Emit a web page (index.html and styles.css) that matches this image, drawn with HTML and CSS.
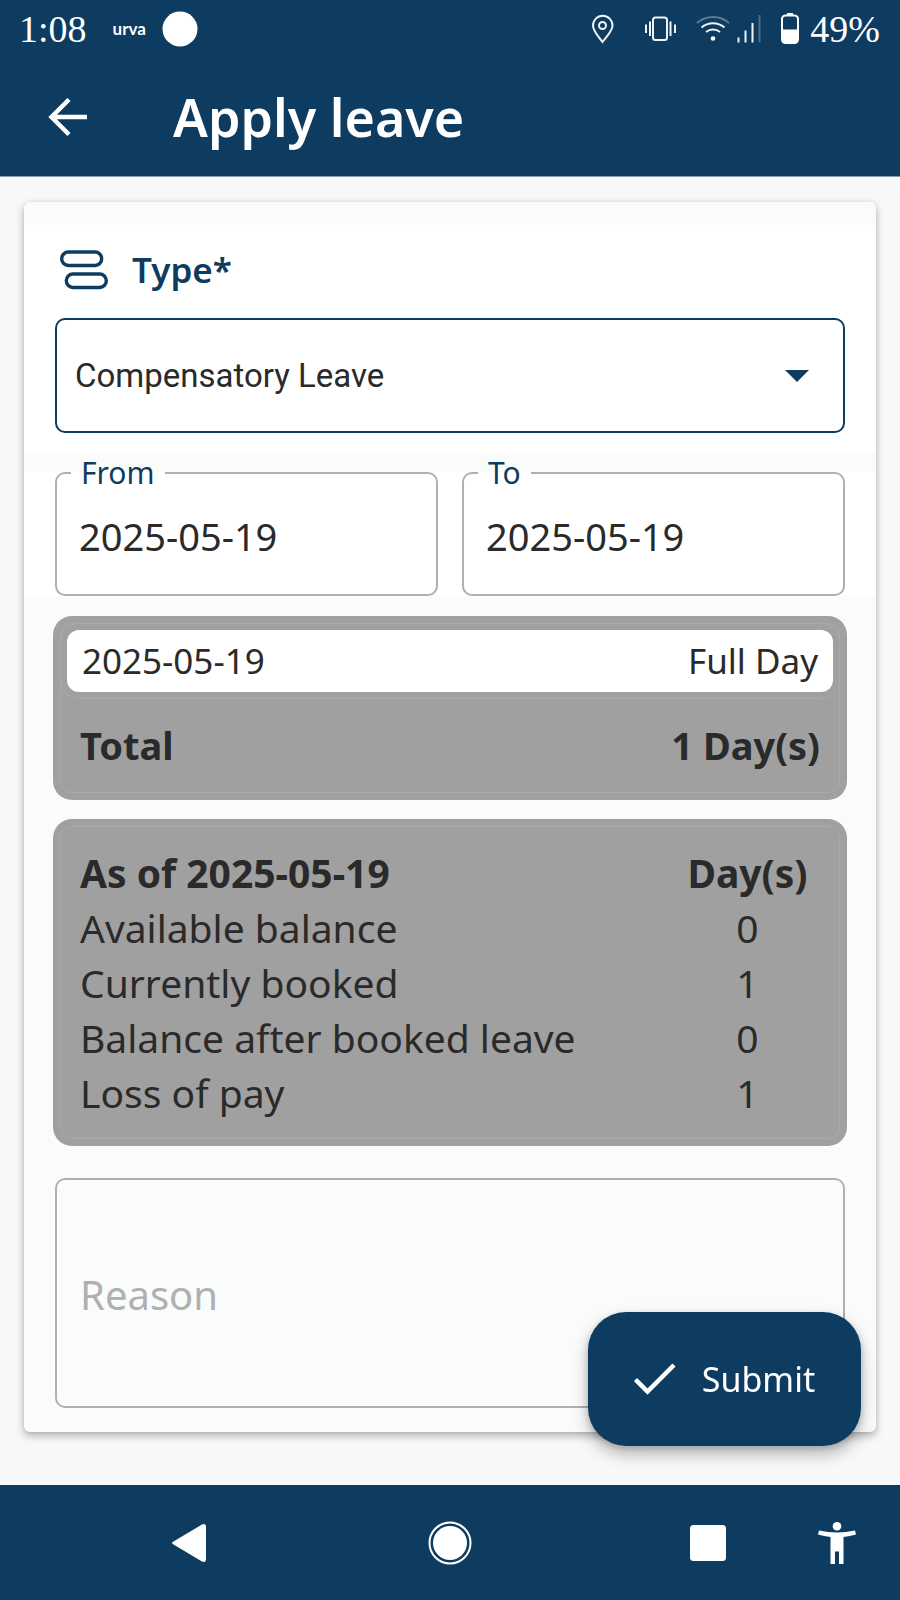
FILE: index.html
```html
<!DOCTYPE html>
<html lang="en">
<head>
<meta charset="utf-8">
<meta name="viewport" content="width=device-width, initial-scale=1">
<title>Apply leave</title>
<link rel="stylesheet" href="styles.css">
</head>
<body>
<header class="top">
  <div class="status">
    <span class="status-text">1:08</span>
    <span class="brand">urva</span>
    <svg class="dot" width="36" height="36" viewBox="0 0 36 36"><circle cx="18" cy="18" r="17.5" fill="#fff"/></svg>
    <svg class="status-icons" width="210" height="36" viewBox="590 11 210 36" fill="none" stroke="#eef3f7" stroke-width="2">
      <path d="M602.500 42C598 36 593 31 593 25.500a9.700 9.700 0 0 1 19.500 0C612.500 31 607 36 602.500 42z"/>
      <circle cx="602.500" cy="25.500" r="3.500"/>
      <rect x="653" y="17.500" width="14" height="22.500" rx="2.500"/>
      <path d="M650 21.500v14.500M646 24.500v8.500M670.500 21.500v14.500M675 24.500v8.500"/>
      <path d="M697 23a24 24 0 0 1 32 0" stroke="#5b7b95"/>
      <path d="M701.500 27.500a17.500 17.500 0 0 1 23 0M706 32a11.500 11.500 0 0 1 14 0"/>
      <circle cx="713" cy="38.500" r="2.300" fill="#fff" stroke="none"/>
      <path d="M738.500 37.500v5M745.500 30.500v12M752.500 23v19.500"/>
      <path d="M759.500 15v27.500" stroke="#4a6e8a"/>
      <rect x="782" y="15.500" width="16" height="27.500" rx="3.500" stroke="#fff"/>
      <path d="M782 29.500h16V40q0 3-3 3h-10q-3 0-3-3zM787 13h6v2h-6z" fill="#fff" stroke="none"/>
    </svg>
    <span class="status-text">49%</span>
  </div>
  <div class="appbar">
    <button class="back" type="button" aria-label="Back">
      <svg width="40" height="40" viewBox="0 0 40 40" fill="none" stroke="#fff" stroke-width="4.500"><path d="M39 20H4M21 2.500L3.500 20 21 37.500"/></svg>
    </button>
    <h1 class="title">Apply leave</h1>
  </div>
</header>
<main class="page">
  <form class="card">
    <section class="type">
      <div class="type-head">
        <svg width="48" height="40" viewBox="0 0 48 40" fill="none" stroke="#0d3c60" stroke-width="3.400"><rect x="1.700" y="2" width="40" height="13.500" rx="6.700"/><rect x="6.300" y="24" width="40" height="13.500" rx="6.700"/></svg>
        <label class="type-label" for="type">Type*</label>
      </div>
      <div class="select-box">
        <select id="type" class="select"><option>Compensatory Leave</option></select>
        <svg class="caret" width="24" height="12" viewBox="0 0 24 12"><path d="M0 0h24L12 12z" fill="#0d3c60"/></svg>
      </div>
    </section>
    <section class="dates">
      <fieldset class="field">
        <legend class="legend"><label for="from">From</label></legend>
        <input id="from" class="date" type="text" value="2025-05-19">
      </fieldset>
      <fieldset class="field">
        <legend class="legend"><label for="to">To</label></legend>
        <input id="to" class="date" type="text" value="2025-05-19">
      </fieldset>
    </section>
    <section class="details">
      <div class="panel">
        <div class="panel-inner">
          <div class="day"><span>2025-05-19</span><span>Full Day</span></div>
          <div class="total"><span>Total</span><span>1 Day(s)</span></div>
        </div>
      </div>
      <div class="panel">
        <div class="panel-inner balance">
          <table class="table">
            <thead><tr><th>As of 2025-05-19</th><th class="num">Day(s)</th></tr></thead>
            <tbody>
              <tr><td>Available balance</td><td class="num">0</td></tr>
              <tr><td>Currently booked</td><td class="num">1</td></tr>
              <tr><td>Balance after booked leave</td><td class="num">0</td></tr>
              <tr><td>Loss of pay</td><td class="num">1</td></tr>
            </tbody>
          </table>
        </div>
      </div>
      <textarea class="reason" aria-label="Reason" placeholder="Reason"></textarea>
    </section>
    <button class="submit" type="button">
      <svg width="42" height="32" viewBox="0 0 42 32" fill="none" stroke="#fff" stroke-width="4.500"><path d="M1.500 16.500l12 12L40 2"/></svg>
      <span>Submit</span>
    </button>
  </form>
</main>
<nav class="nav">
  <button class="nav-btn" type="button" aria-label="Back"><svg width="36" height="44" viewBox="0 0 36 44"><path d="M2.500 20.500L31 3.500q4-1.500 4 2.500v32q0 4-4 2.500L2.500 23.500q-3-1.500 0-3z" fill="#fff"/></svg></button>
  <button class="nav-btn" type="button" aria-label="Home"><svg width="44" height="44" viewBox="0 0 44 44"><circle cx="22" cy="22" r="20.500" fill="none" stroke="#fff" stroke-width="2"/><circle cx="22" cy="22" r="17" fill="#fff"/></svg></button>
  <button class="nav-btn recents" type="button" aria-label="Recents"><svg width="36" height="36" viewBox="0 0 36 36"><rect width="36" height="36" rx="3.500" fill="#fff"/></svg></button>
  <button class="nav-btn" type="button" aria-label="Accessibility"><svg width="38" height="42" viewBox="0 0 38 42" fill="#fff"><circle cx="19" cy="4.300" r="4.300"/><path d="M1 8.500q18 4 36 0l1 4q-6 1.700-12.500 2.500V42h-4.500V29.500h-4V42h-4.500V15Q6 14.200 0 12.500z"/></svg></button>
</nav>
</body>
</html>
```
FILE: styles.css
```css
* { box-sizing: border-box; }
body {
  margin: 0;
  min-height: 100vh;
  display: flex;
  flex-direction: column;
  background: #f8f8f8;
  color: #2a2a2a;
  font-family: "Noto Sans", sans-serif;
}
button, input, select, textarea { font: inherit; color: inherit; }
button { border: 0; padding: 0; background: none; cursor: pointer; }
svg { display: block; flex: none; }

.top { background: #0d3c60; color: #fff; border-bottom: 1px solid #7f9cb3; }
.status {
  display: flex;
  align-items: center;
  height: 58px;
  padding: 0 20px 0 19px;
}
.status-text { font: 38px/58px "Liberation Serif", serif; }
.brand { margin-left: 26px; font: 700 17px/20px Lato, sans-serif; }
.dot { margin-left: 16px; }
.status-icons { margin: 0 10px 0 auto; }
.appbar { display: flex; align-items: center; height: 118px; padding: 0 48px; }
.back { width: 40px; height: 40px; }
.title { margin: 0 0 0 85px; font-size: 52px; line-height: 60px; font-weight: 600; }

.page { flex: 1; padding: 25px 24px 52px; }
.card {
  background: #fafcfb;
  border-radius: 6px;
  padding: 23px 0 24px;
  box-shadow: 0 4px 8px rgba(0, 0, 0, 0.28), 0 0 4px rgba(0, 0, 0, 0.08);
}
.type { padding: 25px 31px 20px; background: #fff; }
.type-head { display: flex; align-items: center; gap: 24px; height: 40px; padding-left: 5px; }
.type-label { color: #0d3c60; font-size: 35px; line-height: 40px; font-weight: 600; }
.select-box { display: grid; align-items: center; margin-top: 28px; }
.select {
  grid-area: 1 / 1;
  appearance: none;
  width: 100%;
  height: 115px;
  padding: 0 60px 0 18px;
  border: 2px solid #0d3c60;
  border-radius: 10px;
  background: #fff;
  font-family: Roboto, sans-serif;
  font-size: 33px;
}
.caret { grid-area: 1 / 1; justify-self: end; margin-right: 36px; pointer-events: none; }

.dates {
  display: grid;
  grid-template-columns: 1fr 1fr;
  gap: 24px;
  margin-top: 19px;
  padding: 0 31px;
  background: #fff;
}
.field {
  min-width: 0;
  height: 124px;
  margin: 0;
  padding: 0 14px;
  border: 2px solid #b0b0b0;
  border-radius: 10px;
}
.legend { height: 2px; padding: 0 10px; color: #0d3c60; font-size: 30px; line-height: 2px; }
.date {
  display: block;
  width: 100%;
  height: 120px;
  padding: 4px 8px 0;
  border: 0;
  background: none;
  font-size: 38px;
}

.details { display: flex; flex-direction: column; gap: 19px; padding: 20px 29px 0; }
.panel { padding: 7px; border-radius: 19px; background: #a0a0a0; }
.panel-inner { border: 1px solid #a9a9a9; border-radius: 12px; }
.day {
  display: flex;
  justify-content: space-between;
  margin: 6px;
  padding: 0 15px;
  border-radius: 12px;
  background: #fff;
  box-shadow: 0 0 0 6px #a0a0a0, 0 0 0 7px #a9a9a9;
  font-size: 35px;
  line-height: 62px;
}
.total {
  display: flex;
  justify-content: space-between;
  padding: 15px 19px;
  font-size: 38px;
  line-height: 64px;
  font-weight: 700;
}
.balance { padding: 18px 19px; }
.table { width: 100%; border-collapse: collapse; font-size: 39px; line-height: 55px; }
.table th, .table td { padding: 0; text-align: left; }
.table .num { width: 145px; text-align: center; }
.reason {
  display: block;
  height: 230px;
  margin: 13px 2px 0;
  padding: 88px 23px 0;
  border: 2px solid #b0b0b0;
  border-radius: 10px;
  background: none;
  resize: none;
  font-size: 40px;
  line-height: 54px;
}
.reason::placeholder { color: #b0b0b0; opacity: 1; }

.submit {
  position: fixed;
  right: 39px;
  bottom: 154px;
  display: flex;
  align-items: center;
  justify-content: center;
  gap: 26px;
  width: 273px;
  height: 134px;
  border-radius: 38px;
  background: #0d3c60;
  color: #fff;
  font-size: 34px;
  box-shadow: 0 8px 16px rgba(0, 0, 0, 0.28), 0 2px 6px rgba(0, 0, 0, 0.16);
}
.nav {
  display: grid;
  grid-template-columns: 63fr 24fr 20fr 22fr 21fr;
  align-items: center;
  height: 115px;
  background: #0d3c60;
}
.nav-btn { display: flex; align-items: center; justify-content: center; height: 115px; }
.recents { grid-column: 4; }
```
